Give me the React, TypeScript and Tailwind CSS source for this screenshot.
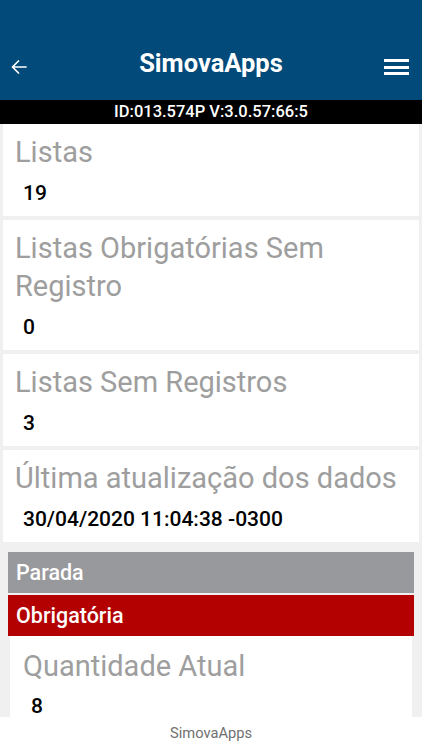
const cards = [
  { label: 'Listas', value: '19' },
  { label: 'Listas Obrigatórias Sem Registro', value: '0' },
  { label: 'Listas Sem Registros', value: '3' },
  { label: 'Última atualização dos dados', value: '30/04/2020 11:04:38 -0300' },
];

function InfoCard({ label, value }: { label: string; value: string }) {
  return (
    <div className="bg-white mx-[3px] pl-[12px] pr-4 pt-[9px] pb-[11px]">
      <p className="text-[29px] leading-[38px] text-[#9e9e9e]">{label}</p>
      <p className="mt-[10px] pl-[8px] text-[21px] leading-[24px] font-medium text-black">{value}</p>
    </div>
  );
}

export default function App() {
  return (
    <div className="h-[750px] w-[422px] flex flex-col bg-[#f0f0f0] overflow-hidden" style={{ fontFamily: 'Roboto, sans-serif' }}>
      <header className="h-[100px] bg-[#024a7a] flex items-end pb-[22px]">
        <div className="w-[50px] pl-[11px] pb-[4px]">
          <svg width="16" height="14" viewBox="0 0 16 14" fill="none" stroke="white" strokeWidth="1.7" strokeLinecap="round" strokeLinejoin="round">
            <path d="M15 7H1.5M7.5 1L1.5 7L7.5 13" />
          </svg>
        </div>
        <h1 className="flex-1 text-center text-white text-[25.5px] font-bold leading-[30px]">SimovaApps</h1>
        <div className="w-[50px] flex flex-col items-end pr-[13px] gap-[3.5px] pb-[3px]">
          <span className="block w-[25px] h-[3px] bg-white" />
          <span className="block w-[25px] h-[3px] bg-white" />
          <span className="block w-[25px] h-[3px] bg-white" />
        </div>
      </header>
      <div className="h-[24px] bg-black text-white text-center text-[16.5px] font-medium leading-[24px]">
        ID:013.574P V:3.0.57:66:5
      </div>

      <div className="flex-1 flex flex-col gap-[4px] min-h-0">
        {cards.map(c => (
          <InfoCard key={c.label} label={c.label} value={c.value} />
        ))}

        <div className="mt-[6px] mx-[8px] flex-1 flex flex-col gap-[2px]">
          <div className="h-[41px] bg-[#98999c] text-white text-[21.5px] font-medium leading-[41px] pl-[8px]">Parada</div>
          <div className="h-[41px] bg-[#b30000] text-white text-[21.5px] font-medium leading-[41px] pl-[8px]">Obrigatória</div>
          <div className="-mt-[2px] mx-[2px] flex-1 bg-white pl-[13px] pt-[11px]">
            <p className="text-[29px] leading-[39px] text-[#9e9e9e]">Quantidade Atual</p>
            <p className="mt-[8px] pl-[8px] text-[21px] leading-[24px] font-medium text-black">8</p>
          </div>
        </div>
      </div>

      <footer className="h-[33px] bg-white text-center text-[14.7px] leading-[33px] text-[#707070]">SimovaApps</footer>
    </div>
  );
}
